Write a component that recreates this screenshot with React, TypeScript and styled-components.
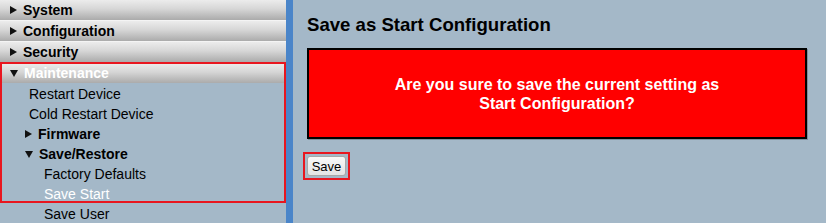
import React from 'react';
import styled, { createGlobalStyle } from 'styled-components';

const GlobalStyle = createGlobalStyle`
    html, body {
        margin: 0;
        padding: 0;
        background: #a4b8c8;
        font-family: "Liberation Sans", Arial, sans-serif;
    }
`;

const Page = styled.div`
    display: flex;
    height: 223px;
    overflow: hidden;
    background: #a4b8c8;
`;

const Sidebar = styled.nav`
    width: 286px;
    flex-shrink: 0;
    display: flex;
    flex-direction: column;
`;

const Divider = styled.div`
    width: 7px;
    flex-shrink: 0;
    background: #4a85c9;
`;

const MenuHeader = styled.div<{ $open?: boolean; $h?: number; $first?: boolean }>`
    height: ${p => p.$h ?? 20}px;
    flex-shrink: 0;
    display: flex;
    align-items: center;
    padding-left: 10px;
    gap: 6px;
    box-sizing: border-box;
    border-top: ${p => (p.$first ? 'none' : '1px solid #f4f4f4')};
    background: linear-gradient(to bottom, #ececec 0%, #d6d6d6 45%, #ababab 100%);
    font-size: 14px;
    font-weight: bold;
    color: ${p => (p.$open ? '#ffffff' : '#000000')};
`;

const Arrow = styled.span<{ $down?: boolean }>`
    width: 0;
    height: 0;
    flex-shrink: 0;
    ${p =>
        p.$down
            ? `border-left: 4px solid transparent;
               border-right: 4px solid transparent;
               border-top: 7px solid #111;
               margin-top: 1px;`
            : `border-top: 4px solid transparent;
               border-bottom: 4px solid transparent;
               border-left: 7px solid #111;`}
`;

const Highlight = styled.div`
    display: flex;
    flex-direction: column;
    outline: 2px solid #e8161f;
    outline-offset: -2px;
`;

const Item = styled.div<{ $indent: number; $active?: boolean; $bold?: boolean }>`
    height: 20px;
    flex-shrink: 0;
    display: flex;
    align-items: center;
    gap: 6px;
    padding-left: ${p => p.$indent}px;
    padding-top: 1px;
    box-sizing: border-box;
    font-size: 14px;
    font-weight: ${p => (p.$bold ? 'bold' : 'normal')};
    color: ${p => (p.$active ? '#ffffff' : '#000000')};
`;

const Main = styled.main`
    flex: 1;
    padding: 14px 0 0 14px;
    display: flex;
    flex-direction: column;
    align-items: flex-start;
`;

const Title = styled.h2`
    margin: 0;
    font-size: 18.6px;
    line-height: 21px;
    font-weight: bold;
    color: #000;
`;

const Warning = styled.div`
    margin-top: 13px;
    width: 500px;
    height: 91px;
    box-sizing: border-box;
    border: 2px solid #000;
    box-shadow: 1px 1px 0 #7d8d9b;
    background: #ff0000;
    display: flex;
    align-items: center;
    justify-content: center;
    text-align: center;
    color: #fff;
    font-size: 16px;
    font-weight: bold;
    line-height: 19px;
`;

const ButtonMark = styled.div`
    margin: 13px 0 0 -4px;
    padding: 2px;
    border: 2px solid #e8161f;
    display: inline-flex;
`;

const Button = styled.button`
    width: 39px;
    height: 20px;
    padding: 0;
    box-sizing: border-box;
    border: 1px solid #a8a8a8;
    border-radius: 3px;
    background: linear-gradient(to bottom, #f8f8f8, #e4e4e4);
    font-family: "Liberation Sans", Arial, sans-serif;
    font-size: 13px;
    color: #000;
`;

const App: React.FC = () => {
    return (
        <>
            <GlobalStyle />
            <Page>
                <Sidebar>
                    <MenuHeader $first>
                        <Arrow />System
                    </MenuHeader>
                    <MenuHeader $h={21}>
                        <Arrow />Configuration
                    </MenuHeader>
                    <MenuHeader $h={21}>
                        <Arrow />Security
                    </MenuHeader>
                    <Highlight>
                        <MenuHeader $open $h={21}>
                            <Arrow $down />Maintenance
                        </MenuHeader>
                        <Item $indent={29}>Restart Device</Item>
                        <Item $indent={29}>Cold Restart Device</Item>
                        <Item $indent={25} $bold>
                            <Arrow />Firmware
                        </Item>
                        <Item $indent={25} $bold>
                            <Arrow $down />Save/Restore
                        </Item>
                        <Item $indent={44}>Factory Defaults</Item>
                        <Item $indent={44} $active>Save Start</Item>
                    </Highlight>
                    <Item $indent={44}>Save User</Item>
                </Sidebar>
                <Divider />
                <Main>
                    <Title>Save as Start Configuration</Title>
                    <Warning>
                        Are you sure to save the current setting as
                        <br />
                        Start Configuration?
                    </Warning>
                    <ButtonMark>
                        <Button type="button">Save</Button>
                    </ButtonMark>
                </Main>
            </Page>
        </>
    );
};

export default App;
